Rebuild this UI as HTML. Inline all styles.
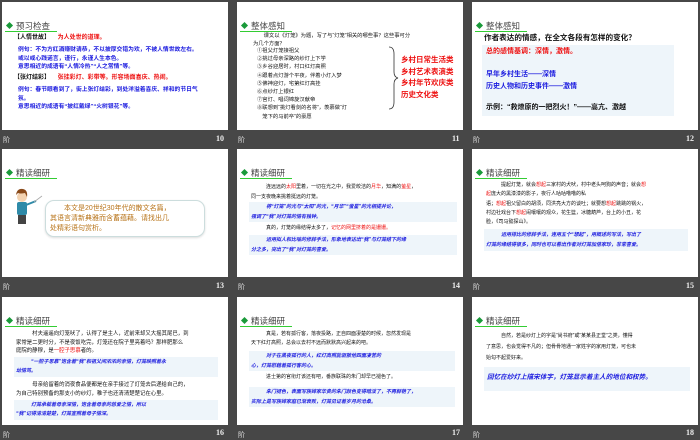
<!DOCTYPE html>
<html><head><meta charset="utf-8"><style>
*{margin:0;padding:0;box-sizing:border-box}
body{width:700px;height:438px;background:#474747;position:relative;overflow:hidden;font-family:"Liberation Sans","Noto Sans CJK SC",sans-serif}
.s{position:absolute;width:226px;height:128px;background:#fff;overflow:hidden}
.f{position:absolute;color:#ddd;font-size:7px}
.n{position:absolute;color:#eee;font-size:8px;font-weight:bold;font-family:"Liberation Serif",serif}
.h{position:absolute;left:3px;top:18px;font-size:8.5px;color:#444;white-space:nowrap}
.h:before{content:"";display:inline-block;width:5px;height:5px;background:#1a9a3a;transform:rotate(45deg);margin:0 4px 0 2px;vertical-align:1px}
.h:after{content:"";position:absolute;left:0;top:11px;width:52px;height:1px;background:#3c3}
.t{position:absolute;font-size:5px;line-height:8.6px;white-space:nowrap}
.b{color:#1a1adf;font-weight:bold}
.r{color:#e11}
.k{color:#111}
.bx{position:absolute;background:#eef5fa}
</style></head><body>

<!-- slide 10 -->
<div class="s" style="left:2px;top:2px">
<div class="h">预习检查</div>
<div class="t k" style="left:12px;top:32px;font-weight:bold;font-size:6px">【人情世故】 <span class="r" style="margin-left:6px">为人处世的道理。</span></div>
<div class="t b" style="left:16px;top:44px;line-height:8.7px;font-size:5.8px">例句：不为方红酒赚财请恭，不以披厚交错为欢，不被人情世故左右。<br>或以或心践诺言，谨行，永谨人生本色。<br>意思相近的成语有“人情冷热”“人之常情”等。</div>
<div class="t k" style="left:12px;top:72px;font-weight:bold;font-size:6px">【张灯结彩】 <span class="r" style="margin-left:6px">张挂彩灯、彩带等。形容场面喜庆、热闹。</span></div>
<div class="t b" style="left:16px;top:84px;line-height:8.7px;font-size:5.8px">例句：春节眼看到了，街上张灯结彩，到处洋溢着喜庆、祥和的节日气<br>氛。<br>意思相近的成语有“披红戴绿”“火树银花”等。</div>
</div>
<div class="f" style="left:3px;top:135px">阶</div><div class="n" style="left:216px;top:134px">10</div>

<!-- slide 11 -->
<div class="s" style="left:237px;top:2px">
<div class="h">整体感知</div>
<div class="t k" style="left:16px;top:30px;line-height:8px;font-size:5.3px">　　课文以《灯笼》为题，写了与“灯笼”相关的哪些事？这些事可分<br>为几个方面？</div>
<div class="t k" style="left:20px;top:45px;line-height:8.2px;font-size:5.3px">①祖父灯笼接祖父<br>②挑过母亲深路的纱灯上下学<br>③乡谷迎居时，村口红灯高照<br>④跟着点灯游个平夜，伴着小灯入梦<br>⑤佛神迎灯，宅第红灯高挂<br>⑥点纱灯上银红<br>⑦宫灯、唱词锦旋汉献帝<br>⑧联想到“挑灯看剑的名将”，羡慕做“灯<br>　笼下的马前卒”的豪愿</div>
<svg style="position:absolute;left:150px;top:44px" width="12" height="64"><path d="M2 1 Q7 1 7 8 L7 26 Q7 31 11 32 Q7 33 7 38 L7 56 Q7 63 2 63" fill="none" stroke="#333" stroke-width="0.8"/></svg>
<div class="t r" style="left:164px;top:52px;font-size:7.5px;line-height:11.5px;font-weight:bold">乡村日常生活类<br>乡村艺术表演类<br>乡村年节欢庆类<br>历史文化类</div>
</div>
<div class="f" style="left:238px;top:135px">阶</div><div class="n" style="left:452px;top:134px">11</div>

<!-- slide 12 -->
<div class="s" style="left:472px;top:2px">
<div class="h">整体感知</div>
<div class="t k" style="left:12px;top:32px;font-size:7.6px;font-weight:bold">作者表达的情感，在全文各段有怎样的变化？</div>
<div class="bx" style="left:10px;top:43px;width:192px;height:71px"></div>
<div class="t r" style="left:14px;top:46px;font-size:7px;font-weight:bold">总的感情基调：深情，激情。</div>
<div class="t b" style="left:14px;top:67px;font-size:7px;line-height:12px">早年乡村生活——深情<br>历史人物和历史事件——激情</div>
<div class="t k" style="left:14px;top:102px;font-size:7px;font-weight:bold">示例：“救燎原的一把烈火！”——高亢、激越</div>
</div>
<div class="f" style="left:473px;top:135px">阶</div><div class="n" style="left:686px;top:134px">12</div>

<!-- slide 13 -->
<div class="s" style="left:2px;top:149px">
<div class="h">精读细研</div>
<svg style="position:absolute;left:10px;top:36px" width="32" height="46"><circle cx="10" cy="12" r="5" fill="#f3d2b0"/><path d="M4 10 Q5 3 11 4 Q16 5 15 12 L13 8 Q8 9 6 8 Z" fill="#8a4a1a"/><rect x="5" y="17" width="10" height="13" rx="2" fill="#2e8aa8"/><rect x="6" y="30" width="8" height="9" fill="#444"/><path d="M14 20 L24 16" stroke="#2e8aa8" stroke-width="2"/><path d="M22 17 L30 11" stroke="#aaa" stroke-width="0.8"/></svg>
<div style="position:absolute;left:43px;top:51px;width:160px;height:37px;border:1px solid #cdd;border-radius:9px;box-shadow:0 1px 2px #ddd;background:#fff"></div>
<div class="t" style="left:48px;top:55px;font-size:7px;line-height:10px;color:#b8741a">　　本文是20世纪30年代的散文名篇，<br>其语言清新典雅而含蓄蕴藉。请找出几<br>处精彩语句赏析。</div>
</div>
<div class="f" style="left:3px;top:282px">阶</div><div class="n" style="left:216px;top:281px">13</div>

<!-- slide 14 -->
<div class="s" style="left:237px;top:149px">
<div class="h">精读细研</div>
<div class="t k" style="left:14px;top:34px;line-height:9.5px">　　　连远远的<span class="r">太阳</span>里着，一切在光之中，我爱皎洁的<span class="r">月华</span>，知满的<span class="r">萤星</span>，<br>同一支夜晚来挑着挺远的灯笼。</div>
<div class="bx" style="left:12px;top:53px;width:208px;height:20px"></div>
<div class="t b" style="left:14px;top:54px;line-height:9.5px;font-style:italic">　　　将“灯笼”的光与“太阳”的光，“月华”“萤星”的光相提并论，<br>强调了“我”对灯笼的情有独钟。</div>
<div class="t k" style="left:14px;top:75px">　　　真的，灯笼的缘结得太多了，<span class="r">记忆的网里挤着的是姗姗。</span></div>
<div class="bx" style="left:12px;top:86px;width:208px;height:20px"></div>
<div class="t b" style="left:14px;top:87px;line-height:9.5px;font-style:italic">　　　运用拟人和比喻的修辞手法，形象地表达出“我”与灯笼结下的缘<br>分之多，突出了“我”对灯笼的喜爱。</div>
</div>
<div class="f" style="left:238px;top:282px">阶</div><div class="n" style="left:452px;top:281px">14</div>

<!-- slide 15 -->
<div class="s" style="left:472px;top:149px">
<div class="h">精读细研</div>
<div class="t k" style="left:14px;top:32px;line-height:9.3px">　　　提起灯笼，就会<span class="r">想起</span>三家村的犬吠，村中老头呵狗的声音；就会<span class="r">想</span><br><span class="r">起</span>庞大的黑漆漆的影子，夜行人咕咕噜噜的私<br>语；<span class="r">想起</span>祖父留白的胡须，同洪亮大方的谈吐；就要想<span class="r">想起</span>跳跳的锅火，<br>村边社戏台下<span class="r">想起</span>闹嚷嚷的观众，花生篮，冰糖葫芦，台上的小丑，花<br>脸，《司马懿探山》。</div>
<div class="bx" style="left:12px;top:80px;width:204px;height:22px"></div>
<div class="t b" style="left:14px;top:82px;line-height:9.5px;font-style:italic">　　　运用排比的修辞手法，连用五个“想起”，用概述的写法，写出了<br>灯笼的缘结得很多，同时也可以看出作者对灯笼加倍家珍，非常喜爱。</div>
</div>
<div class="f" style="left:473px;top:282px">阶</div><div class="n" style="left:686px;top:281px">15</div>

<!-- slide 16 -->
<div class="s" style="left:2px;top:297px">
<div class="h">精读细研</div>
<div class="t k" style="left:14px;top:33px;line-height:8.5px;font-size:5.4px">　　　村夫遥遥向灯笼吠了，认得了是主人，近前来却又大摇其尾巴，到<br>家常是二更时分，不是夜饭吃完，灯笼还在院子里亮着吗？那样肥那么<br>庭院的静穆，是<span class="r">一腔子思慕</span>者的。</div>
<div class="bx" style="left:12px;top:60px;width:204px;height:20px"></div>
<div class="t b" style="left:14px;top:61px;line-height:9px;font-style:italic">　　　“一腔子思慕”饱含着“我”和祖父间浓浓的亲情，灯笼映照着永<br>幼情笃。</div>
<div class="t k" style="left:14px;top:84px;line-height:8.5px;font-size:5.4px">　　　母亲给留着的消夜食品便都是在亲手接过了灯笼去后递给自己的，<br>为自己特别预备的那支小的纱灯，稚子也还清清楚楚记在心里。</div>
<div class="bx" style="left:12px;top:103px;width:204px;height:20px"></div>
<div class="t b" style="left:14px;top:104px;line-height:9px;font-style:italic">　　　灯笼承载着母亲深情，饱含着母亲的慈爱之情，所以<br>“我”记得清清楚楚，灯笼宣照着母子情深。</div>
</div>
<div class="f" style="left:3px;top:430px">阶</div><div class="n" style="left:216px;top:428px">16</div>

<!-- slide 17 -->
<div class="s" style="left:237px;top:297px">
<div class="h">精读细研</div>
<div class="t k" style="left:14px;top:33px;line-height:8.8px">　　　真是，若有孤行客，落夜投路，正自四面凄楚的时候，忽然发现是<br>天下红灯高照，总会以去村不远而默默高兴起来的吧。</div>
<div class="bx" style="left:12px;top:54px;width:206px;height:20px"></div>
<div class="t b" style="left:14px;top:55px;line-height:9.5px;font-style:italic">　　　对于在黑夜孤行的人，红灯高照能驱散他四面凄苦的<br>心，灯笼慰藉着孤行客的心。</div>
<div class="t k" style="left:14px;top:76px">　　　进士第的官衔灯该还有吧，番族联珠的朱门却早已褪色了。</div>
<div class="bx" style="left:12px;top:90px;width:206px;height:20px"></div>
<div class="t b" style="left:14px;top:91px;line-height:9.5px;font-style:italic">　　　朱门褪色，表面写族婶家华贵的朱门颜色变得暗淡了，不再鲜艳了，<br>实际上是写族婶家庭已渐衰败，灯笼见证着岁月的沧桑。</div>
</div>
<div class="f" style="left:238px;top:430px">阶</div><div class="n" style="left:452px;top:428px">17</div>

<!-- slide 18 -->
<div class="s" style="left:472px;top:297px">
<div class="h">精读细研</div>
<div class="t k" style="left:14px;top:34px;line-height:11px">　　　自然，若是纱灯上的字是“尚书府”或“某某县正堂”之类，懂得<br>了意思，也会觉得不凡的；但骨骨地通一家姓字的家用灯笼，可也未<br>始勾不起爱好来。</div>
<div class="bx" style="left:12px;top:70px;width:206px;height:24px"></div>
<div class="t b" style="left:15px;top:77px;font-size:6.6px;font-style:italic">回忆在纱灯上描宋体字，灯笼显示着主人的地位和权势。</div>
</div>
<div class="f" style="left:473px;top:430px">阶</div><div class="n" style="left:686px;top:428px">18</div>

</body></html>
